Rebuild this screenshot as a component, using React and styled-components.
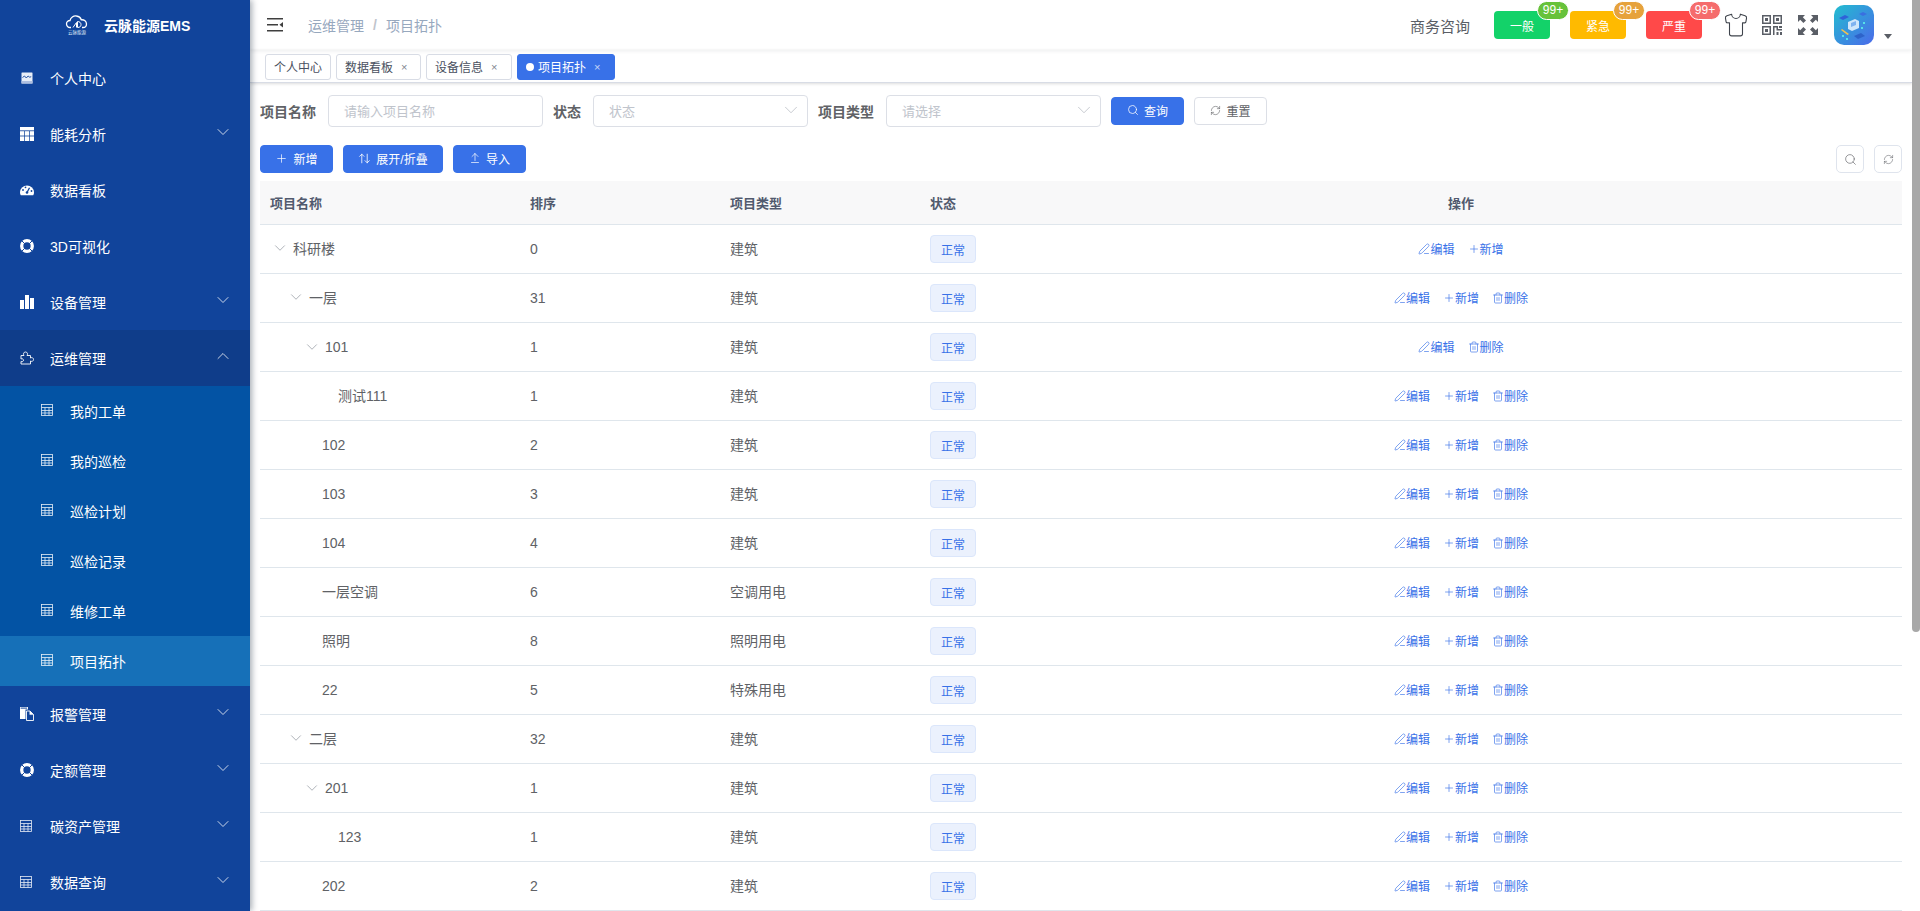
import React from 'react';
import styled, { createGlobalStyle } from 'styled-components';
import {
    ChevronDown, ChevronUp, Search, RefreshCw, Plus, ArrowUpFromLine, ArrowUpDown, PenLine, Trash2, Shirt
} from 'lucide-react';

const GlobalStyle = createGlobalStyle`
    html, body { margin: 0; height: 100%; overflow: hidden; background: #fff; }
    body {
        font-family: "Liberation Sans", "Noto Sans CJK SC", sans-serif;
        font-size: 14px;
        color: #606266;
    }
    * { box-sizing: border-box; }
`

/* sidebar icons, drawn because the packages have no filled versions of them */
const ReportIcon = () => (
    <svg width="14" height="14" viewBox="0 0 14 14">
        <rect x="1.500" y="1.500" width="11" height="11" rx="0.500" fill="#e8eef8" />
        <rect x="1.500" y="10" width="11" height="2.500" fill="#aebfe0" />
        <path d="M2.500 6.500l2 -1.500 1.800 2 1.800 -2 1.600 1.200 1.500 -.5" fill="none" stroke="#11449b" strokeWidth="0.900" />
    </svg>
)
const GridIcon = () => (
    <svg width="14" height="14" viewBox="0 0 14 14" fill="#fff">
        <rect x="0" y="0" width="14" height="3.400" />
        <rect x="0" y="4.200" width="4.200" height="4.400" />
        <rect x="4.900" y="4.200" width="4.200" height="4.400" />
        <rect x="9.800" y="4.200" width="4.200" height="4.400" />
        <rect x="0" y="9.400" width="4.200" height="4.600" />
        <rect x="4.900" y="9.400" width="4.200" height="4.600" />
        <rect x="9.800" y="9.400" width="4.200" height="4.600" />
    </svg>
)
const GaugeIcon = () => (
    <svg width="14" height="14" viewBox="0 0 14 14">
        <path d="M0 9.500a7 7 0 0 1 14 0c0 1 -.3 2 -.8 2.700H.8C.3 11.500 0 10.500 0 9.500z" fill="#fff" />
        <path d="M7 9.500L9.500 4.800" stroke="#11449b" strokeWidth="1.300" />
        <circle cx="7" cy="9.500" r="1.300" fill="#11449b" />
        <circle cx="3" cy="7" r="0.900" fill="#11449b" />
        <circle cx="5.500" cy="4.300" r="0.900" fill="#11449b" />
        <circle cx="11.500" cy="8" r="0.900" fill="#11449b" />
    </svg>
)
const RingIcon = () => (
    <svg width="14" height="14" viewBox="0 0 14 14">
        <circle cx="7" cy="7" r="5.300" fill="none" stroke="#fff" strokeWidth="3.300" />
        <path d="M1.800 1.800l2.800 2.800M12.200 1.800L9.400 4.600M1.800 12.200l2.800 -2.800M12.200 12.200L9.400 9.400" stroke="#11449b" strokeWidth="1" />
    </svg>
)
const BarsIcon = () => (
    <svg width="14" height="14" viewBox="0 0 14 14" fill="#fff">
        <rect x="0" y="5" width="4" height="9" />
        <rect x="5" y="0" width="4" height="14" />
        <rect x="10" y="3" width="4" height="11" />
    </svg>
)
const PuzzleIcon = () => (
    <svg width="14" height="14" viewBox="0 0 14 14" fill="none" stroke="#fff" strokeWidth="0.900">
        <path d="M1 4.500H4c-1 -1.500 -.5 -3.500 1.500 -3.500s2.500 2 1.500 3.500h3.500V7c1.500 -1 3 0 3 1.500s-1.500 2.500 -3 1.500v3H1v-2.500c1.200 .5 2.500 0 2.500 -1.300S2.200 7.500 1 8z" />
    </svg>
)
const TableIcon = () => (
    <svg width="12" height="12" viewBox="0 0 12 12" fill="none" stroke="#fff" strokeWidth="0.800" opacity="0.9">
        <rect x="0.500" y="0.500" width="11" height="11" />
        <path d="M0.500 3.500h11M0.500 6.500h11M0.500 9h11M4 3.500v8M8 3.500v8" />
    </svg>
)
const FilesIcon = () => (
    <svg width="14" height="14" viewBox="0 0 14 14">
        <path d="M0 0h8v2.500H5.500V12H0z" fill="#fff" />
        <rect x="0.600" y="0.600" width="6.500" height="1" fill="#11449b" />
        <path d="M6.500 4h3.500l3.500 3.500V13.500h-7z" fill="#11449b" stroke="#fff" strokeWidth="0.900" />
        <path d="M9.800 4v3.600h3.700" fill="#fff" stroke="#fff" strokeWidth="0.500" />
    </svg>
)

const menuTop = [
    { title: '个人中心', icon: <ReportIcon /> },
    { title: '能耗分析', icon: <GridIcon />, arrow: true },
    { title: '数据看板', icon: <GaugeIcon /> },
    { title: '3D可视化', icon: <RingIcon /> },
    { title: '设备管理', icon: <BarsIcon />, arrow: true },
]
const subMenu = ['我的工单', '我的巡检', '巡检计划', '巡检记录', '维修工单', '项目拓扑']
const menuBottom = [
    { title: '报警管理', icon: <FilesIcon />, arrow: true },
    { title: '定额管理', icon: <RingIcon />, arrow: true },
    { title: '碳资产管理', icon: <TableIcon />, arrow: true },
    { title: '数据查询', icon: <TableIcon />, arrow: true },
]

const tags = [
    { title: '个人中心', width: 66 },
    { title: '数据看板', width: 85, close: true },
    { title: '设备信息', width: 86, close: true },
    { title: '项目拓扑', width: 98, close: true, active: true },
]

const alarms = [
    { title: '一般', color: '#13d269', badge: '#67c23a' },
    { title: '紧急', color: '#ffba00', badge: '#e6a23c' },
    { title: '严重', color: '#ff4949', badge: '#f56c6c' },
]

const rows = [
    { name: '科研楼', sort: 0, type: '建筑', level: 0, open: true, ops: 'ea' },
    { name: '一层', sort: 31, type: '建筑', level: 1, open: true, ops: 'ead' },
    { name: '101', sort: 1, type: '建筑', level: 2, open: true, ops: 'ed' },
    { name: '测试111', sort: 1, type: '建筑', level: 3, ops: 'ead' },
    { name: '102', sort: 2, type: '建筑', level: 2, ops: 'ead' },
    { name: '103', sort: 3, type: '建筑', level: 2, ops: 'ead' },
    { name: '104', sort: 4, type: '建筑', level: 2, ops: 'ead' },
    { name: '一层空调', sort: 6, type: '空调用电', level: 2, ops: 'ead' },
    { name: '照明', sort: 8, type: '照明用电', level: 2, ops: 'ead' },
    { name: '22', sort: 5, type: '特殊用电', level: 2, ops: 'ead' },
    { name: '二层', sort: 32, type: '建筑', level: 1, open: true, ops: 'ead' },
    { name: '201', sort: 1, type: '建筑', level: 2, open: true, ops: 'ead' },
    { name: '123', sort: 1, type: '建筑', level: 3, ops: 'ead' },
    { name: '202', sort: 2, type: '建筑', level: 2, ops: 'ead' },
]

const opList = {
    e: { label: '编辑', icon: <PenLine size={12} strokeWidth={1.3} /> },
    a: { label: '新增', icon: <Plus size={12} strokeWidth={1.3} /> },
    d: { label: '删除', icon: <Trash2 size={12} strokeWidth={1.3} /> },
}

const MenuItem = ({ title, icon, arrow, open }) => (
    <Item $open={open}>
        <ItemIcon>{icon}</ItemIcon>
        <span>{title}</span>
        {arrow && <ItemArrow>{open ? <ChevronUp size={20} strokeWidth={1.1} /> : <ChevronDown size={20} strokeWidth={1.1} />}</ItemArrow>}
    </Item>
)

const App = () => {
    return (
        <Layout>
            <GlobalStyle />
            <Sidebar>
                <Logo>
                    <svg width="24" height="20" viewBox="0 0 24 20">
                        <path d="M6 12.500H5a3.500 3.500 0 0 1 0 -7c.6 -3 3.500 -5 6.500 -4.500 2.400 .3 4.200 2 4.800 3.800 3 -.3 5.200 1.700 5.200 4.200 0 2.300 -1.800 3.500 -3.500 3.500H17" fill="none" stroke="#fff" strokeWidth="1.300" />
                        <path d="M8 12.500l3.500 -5v5M12.500 6.500v6c2.500 0 3.500 -1.200 3.500 -3s-1.500 -3 -3.500 -3z" fill="none" stroke="#fff" strokeWidth="1" />
                        <text x="12" y="18.500" textAnchor="middle" fontSize="4.500" fill="#dfe8f5">云脉能源</text>
                    </svg>
                    <LogoTitle>云脉能源EMS</LogoTitle>
                </Logo>
                {menuTop.map(m => <MenuItem key={m.title} {...m} />)}
                <MenuItem title="运维管理" icon={<PuzzleIcon />} arrow open />
                {subMenu.map(title => (
                    <SubItem key={title} $active={title === '项目拓扑'}>
                        <SubIcon><TableIcon /></SubIcon>
                        <span>{title}</span>
                    </SubItem>
                ))}
                {menuBottom.map(m => <MenuItem key={m.title} {...m} />)}
            </Sidebar>

            <Main>
                <Navbar>
                    <Hamburger>
                        <svg width="17" height="14" viewBox="0 0 17 14" fill="#3f3f3f">
                            <rect x="0" y="0" width="16" height="1.500" />
                            <rect x="0" y="6" width="11" height="1.500" />
                            <rect x="0" y="12" width="16" height="1.500" />
                            <path d="M16 4v5.500L12.500 6.700z" />
                        </svg>
                    </Hamburger>
                    <Crumb>运维管理</Crumb>
                    <CrumbSep>/</CrumbSep>
                    <Crumb>项目拓扑</Crumb>
                    <NavRight>
                        <Consult>商务咨询</Consult>
                        {alarms.map(a => (
                            <Alarm key={a.title} $color={a.color}>
                                {a.title}
                                <Badge $color={a.badge}>99+</Badge>
                            </Alarm>
                        ))}
                        <NavIcon $first>
                            <Shirt size={26} strokeWidth={1} color="#3f444c" />
                        </NavIcon>
                        <NavIcon>
                            <svg width="20" height="20" viewBox="0 0 20 20" fill="#5a5e66">
                                <path fillRule="evenodd" d="M0 0h9v9H0zM1.500 1.500v6h6v-6zM11 0h9v9h-9zM12.500 1.500v6h6v-6zM0 11h9v9H0zM1.500 12.500v6h6v-6z" />
                                <rect x="3" y="3" width="3" height="3" />
                                <rect x="14" y="3" width="3" height="3" />
                                <rect x="3" y="14" width="3" height="3" />
                                <path d="M11 11h5v3h4v1.500h-5.500v-3H12.500V20H11zM17 11h3v2h-3zM14.500 17h2v3h-2zM18 17h2v3h-2z" />
                            </svg>
                        </NavIcon>
                        <NavIcon>
                            <svg width="20" height="20" viewBox="0 0 20 20" fill="#5a5e66">
                                <path d="M0 0h7L4.800 2.200 8 5.400 5.400 8 2.200 4.800 0 7z" />
                                <path d="M20 0h-7l2.200 2.200L12 5.400 14.600 8l3.200 -3.200L20 7z" />
                                <path d="M0 20h7l-2.200 -2.200L8 14.600 5.400 12l-3.200 3.200L0 13z" />
                                <path d="M20 20h-7l2.200 -2.200L12 14.600l2.600 -2.600 3.200 3.200L20 13z" />
                            </svg>
                        </NavIcon>
                        <Avatar>
                            <svg width="40" height="40" viewBox="0 0 40 40">
                                <path d="M5 13l6 -3 4 2 -6 3z" fill="#2f62d8" />
                                <path d="M25 9l4 -2 4 2 -4 2z" fill="#3a6fe0" />
                                <path d="M14 17l7 -3 4 2v7l-7 3 -4 -2z" fill="#cfe6fb" />
                                <path d="M17 18l5 -2v4l-5 2z" fill="#7fb2f0" />
                                <path d="M8 24l7 5 -1.500 1 -6.500 -5z" fill="#f2c14e" />
                                <path d="M20 31l7 -3 4 3 -7 3z" fill="#2e63c9" />
                                <rect x="29" y="17" width="2" height="2" fill="#57e0e8" />
                                <rect x="27" y="22" width="2" height="2" fill="#57e0e8" />
                                <rect x="12" y="33" width="2" height="2" fill="#57e0e8" />
                                <rect x="8" y="30" width="2" height="2" fill="#57e0e8" />
                            </svg>
                        </Avatar>
                        <Caret />
                    </NavRight>
                </Navbar>

                <TagBar>
                    {tags.map(t => (
                        <Tag key={t.title} $active={t.active} $width={t.width}>
                            {t.active && <TagDot />}
                            {t.title}
                            {t.close && <TagClose>×</TagClose>}
                        </Tag>
                    ))}
                </TagBar>

                <PageBody>
                    <FilterForm>
                        <FieldLabel>项目名称</FieldLabel>
                        <Field>请输入项目名称</Field>
                        <FieldLabel>状态</FieldLabel>
                        <Field>状态<FieldArrow><ChevronDown size={22} strokeWidth={0.8} /></FieldArrow></Field>
                        <FieldLabel>项目类型</FieldLabel>
                        <Field>请选择<FieldArrow><ChevronDown size={22} strokeWidth={0.8} /></FieldArrow></Field>
                        <Button $primary $width={73}><Search size={12} strokeWidth={1.5} />查询</Button>
                        <Button $width={73}><RefreshCw size={11} strokeWidth={1.3} />重置</Button>
                    </FilterForm>

                    <Toolbar>
                        <Button $primary $width={73}><Plus size={13} strokeWidth={1.3} />新增</Button>
                        <Button $primary $width={100}><ArrowUpDown size={13} strokeWidth={1.5} />展开/折叠</Button>
                        <Button $primary $width={73}><ArrowUpFromLine size={12} strokeWidth={1.4} />导入</Button>
                        <ToolRight>
                            <RoundButton><Search size={13} strokeWidth={1.2} /></RoundButton>
                            <RoundButton><RefreshCw size={11} strokeWidth={1.2} /></RoundButton>
                        </ToolRight>
                    </Toolbar>

                    <Table>
                        <colgroup>
                            <col width="260" />
                            <col width="200" />
                            <col width="200" />
                            <col width="100" />
                            <col />
                        </colgroup>
                        <thead>
                            <tr>
                                <Th>项目名称</Th>
                                <Th>排序</Th>
                                <Th>项目类型</Th>
                                <Th>状态</Th>
                                <Th $center>操作</Th>
                            </tr>
                        </thead>
                        <tbody>
                            {rows.map((r, i) => (
                                <tr key={i}>
                                    <Td $lift={/\D/.test(r.name)}>
                                        <TreeCell $level={r.level}>
                                            <TreeArrow $open={r.open}>{r.open && <ChevronDown size={18} strokeWidth={0.9} />}</TreeArrow>
                                            {r.name}
                                        </TreeCell>
                                    </Td>
                                    <Td>{r.sort}</Td>
                                    <Td $lift>{r.type}</Td>
                                    <Td><StatusTag>正常</StatusTag></Td>
                                    <Td $center>
                                        <Ops>
                                            {r.ops.split('').map(k => (
                                                <Op key={k}>{opList[k].icon}{opList[k].label}</Op>
                                            ))}
                                        </Ops>
                                    </Td>
                                </tr>
                            ))}
                        </tbody>
                    </Table>
                </PageBody>
            </Main>
            <ScrollRail>
                <ScrollThumb />
            </ScrollRail>
        </Layout>
    )
}

const Layout = styled.div`
    display: flex;
    height: 100vh;
    overflow: hidden;
`
const Sidebar = styled.aside`
    flex: 0 0 250px;
    height: 100%;
    overflow: hidden;
    background: #11449b;
    box-shadow: 2px 0 6px rgba(0, 21, 41, .35);
    position: relative;
    z-index: 2;
    color: #fff;
`
const Logo = styled.div`
    height: 50px;
    display: flex;
    align-items: center;
    padding-left: 65px;
`
const LogoTitle = styled.span`
    margin-left: 15px;
    font-size: 14px;
    font-weight: bold;
    color: #fff;
`
const Item = styled.div`
    height: 56px;
    display: flex;
    align-items: center;
    padding: 0 17px 0 20px;
    background: ${p => p.$open ? '#0f3d8a' : 'transparent'};
`
const ItemIcon = styled.span`
    width: 30px;
    height: 14px;
    display: flex;
    align-items: center;
`
const ItemArrow = styled.span`
    margin-left: auto;
    display: flex;
    transform: translateY(-2px);
    opacity: .85;
`
const SubItem = styled.div`
    height: 50px;
    display: flex;
    align-items: center;
    padding-left: 41px;
    background: ${p => p.$active ? '#1670b8' : '#0353a4'};
`
const SubIcon = styled.span`
    width: 29px;
    height: 12px;
    display: flex;
    transform: translateY(-1px);
`
const Main = styled.main`
    flex: 1;
    min-width: 0;
    height: 100%;
    overflow: hidden;
    background: #fff;
`
const ScrollRail = styled.div`
    flex: 0 0 8px;
    height: 100%;
    background: #fff;
`
const ScrollThumb = styled.div`
    height: 632px;
    background: #a8a8a8;
    border-radius: 0 0 4px 4px;
`
const Navbar = styled.header`
    height: 50px;
    display: flex;
    align-items: center;
    padding-left: 17px;
    box-shadow: 0 1px 4px rgba(0, 21, 41, .08);
    position: relative;
`
const Hamburger = styled.span`
    display: flex;
    margin-right: 24px;
`
const Crumb = styled.span`
    color: #97a8be;
    font-size: 14px;
`
const CrumbSep = styled.span`
    color: #c0c4cc;
    margin: 0 9px;
    font-weight: bold;
`
const NavRight = styled.div`
    margin-left: auto;
    display: flex;
    align-items: center;
    height: 100%;
    padding-right: 20px;
`
const Consult = styled.span`
    font-size: 15px;
    color: #5a5e66;
    margin-right: 4px;
`
const Alarm = styled.span`
    position: relative;
    width: 56px;
    height: 28px;
    margin-left: 20px;
    border-radius: 4px;
    background: ${p => p.$color};
    color: #fff;
    font-size: 12px;
    display: flex;
    align-items: center;
    justify-content: center;
`
const Badge = styled.span`
    position: absolute;
    top: -10px;
    right: -19px;
    width: 32px;
    height: 19px;
    border-radius: 10px;
    border: 1px solid #fff;
    background: ${p => p.$color};
    color: #fff;
    font-size: 12px;
    line-height: 17px;
    text-align: center;
`
const NavIcon = styled.span`
    width: 20px;
    height: 20px;
    margin-left: ${p => p.$first ? '24px' : '16px'};
    display: flex;
    align-items: center;
    justify-content: center;
    svg { flex: none; }
`
const Avatar = styled.span`
    width: 40px;
    height: 40px;
    margin-left: 16px;
    border-radius: 10px;
    overflow: hidden;
    display: block;
    background: linear-gradient(135deg, #22bdd0, #4b6aea);
`
const Caret = styled.span`
    width: 0;
    height: 0;
    margin: 22px 0 0 10px;
    border-left: 4px solid transparent;
    border-right: 4px solid transparent;
    border-top: 5px solid #5a5e66;
`
const TagBar = styled.nav`
    height: 33px;
    display: flex;
    align-items: center;
    gap: 5px;
    padding: 1px 0 0 15px;
    border-bottom: 1px solid #d8dce5;
    box-shadow: 0 1px 3px rgba(0, 0, 0, .12), 0 0 3px rgba(0, 0, 0, .04);
    position: relative;
`
const Tag = styled.span`
    width: ${p => p.$width}px;
    height: 26px;
    display: flex;
    align-items: center;
    padding-left: 8px;
    border-radius: 3px;
    border: 1px solid ${p => p.$active ? '#3871e8' : '#d8dce5'};
    background: ${p => p.$active ? '#3871e8' : '#fff'};
    color: ${p => p.$active ? '#fff' : '#495060'};
    font-size: 12px;
`
const TagDot = styled.i`
    width: 8px;
    height: 8px;
    margin-right: 4px;
    border-radius: 50%;
    background: #fff;
`
const TagClose = styled.span`
    margin-left: 8px;
    font-size: 11px;
    opacity: .7;
`
const PageBody = styled.section`
    padding: 12px 10px;
`
const FilterForm = styled.div`
    height: 32px;
    display: flex;
    align-items: center;
    margin-bottom: 18px;
`
const FieldLabel = styled.label`
    font-size: 14px;
    font-weight: bold;
    color: #606266;
    margin-right: 12px;
`
const Field = styled.div`
    width: 215px;
    height: 32px;
    margin-right: 10px;
    padding: 0 0 2px 15px;
    display: flex;
    align-items: center;
    justify-content: space-between;
    border: 1px solid #dcdfe6;
    border-radius: 4px;
    background: #fff;
    color: #c0c4cc;
    font-size: 13px;
`
const FieldArrow = styled.span`
    display: flex;
    margin-right: 5px;
    color: #b4b8c0;
`
const Button = styled.button`
    width: ${p => p.$width}px;
    height: 28px;
    margin-right: 10px;
    padding: 0 0 2px;
    display: inline-flex;
    align-items: center;
    justify-content: center;
    gap: 5px;
    border-radius: 4px;
    border: 1px solid ${p => p.$primary ? '#3871e8' : '#dcdfe6'};
    background: ${p => p.$primary ? '#3871e8' : '#fff'};
    color: ${p => p.$primary ? '#fff' : '#606266'};
    font: inherit;
    font-size: 12px;
`
const Toolbar = styled.div`
    height: 28px;
    display: flex;
    align-items: center;
    margin-bottom: 8px;
`
const ToolRight = styled.div`
    margin-left: auto;
    display: flex;
    gap: 10px;
`
const RoundButton = styled.span`
    width: 28px;
    height: 28px;
    display: flex;
    align-items: center;
    justify-content: center;
    border-radius: 5px;
    border: 1px solid #dfe4ed;
    color: #606266;
`
const Table = styled.table`
    width: 100%;
    table-layout: fixed;
    border-collapse: separate;
    border-spacing: 0;
    font-size: 14px;
`
const Th = styled.th`
    height: 44px;
    padding: 0 10px;
    background: #f8f8f9;
    border-bottom: 1px solid #dfe6ec;
    color: #515a6e;
    font-size: 13px;
    font-weight: bold;
    text-align: ${p => p.$center ? 'center' : 'left'};
`
const Td = styled.td`
    height: 49px;
    padding: 0 10px ${p => p.$lift ? '2px' : '0'};
    border-bottom: 1px solid #dfe6ec;
    color: #606266;
    font-size: 14px;
    text-align: ${p => p.$center ? 'center' : 'left'};
`
const TreeCell = styled.div`
    display: flex;
    align-items: center;
    padding-left: ${p => p.$level * 16}px;
`
const TreeArrow = styled.span`
    flex: 0 0 ${p => p.$open ? 23 : 20}px;
    display: flex;
    margin-left: ${p => p.$open ? '1px' : '0'};
    margin-right: ${p => p.$open ? '-1px' : '0'};
    color: #888d96;
`
const StatusTag = styled.span`
    display: inline-flex;
    align-items: center;
    justify-content: center;
    width: 46px;
    height: 28px;
    border-radius: 4px;
    border: 1px solid #dbe6fb;
    background: #ebf1fd;
    color: #3871e8;
    font-size: 12px;
`
const Ops = styled.div`
    display: inline-flex;
    gap: 13px;
`
const Op = styled.span`
    display: inline-flex;
    align-items: center;
    color: #3871e8;
    font-size: 12px;
`

export default App
